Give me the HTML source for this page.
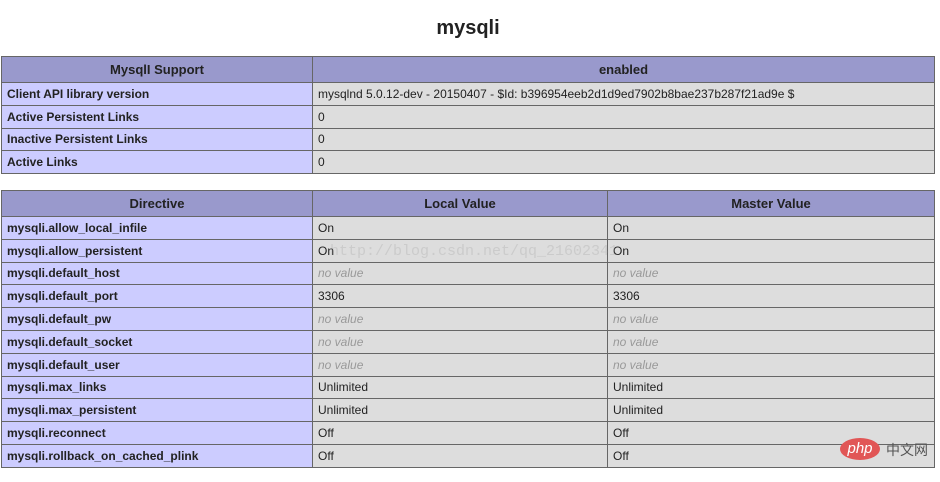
<!DOCTYPE html>
<html><head><meta charset="utf-8"><style>
html,body{margin:0;padding:0;background:#fff;width:940px;height:482px;overflow:hidden;font-family:"Liberation Sans",Arial,sans-serif;font-size:12px;color:#222}
h2{position:absolute;left:0;width:936px;top:17px;margin:0;text-align:center;font-size:20px;font-weight:bold;color:#222}
table{position:absolute;left:1px;border-collapse:collapse;width:934px;table-layout:fixed}
td,th{border:1px solid #666;padding:0 5px;height:21.7px;box-sizing:border-box;vertical-align:middle;white-space:nowrap;overflow:hidden}
td{height:22.8px}
th{background:#9999cc;font-weight:bold;height:26px;font-size:13px;color:#222}
.e{background:#ccccff;font-weight:bold;color:#222}
.v{background:#ddd;color:#222}
.i{color:#999;font-style:italic}
.wm{position:absolute;left:330px;top:243px;color:rgba(150,150,150,.25);font-family:"Liberation Mono",monospace;font-size:15px}
.logo{position:absolute;left:840px;top:438px;width:40px;height:22px;background:#e15656;border-radius:50%;color:#fff;font-style:italic;font-size:15px;text-align:center;line-height:21px}
.cn{position:absolute;left:886px;top:440px;font-family:"Liberation Sans","Noto Sans CJK SC",sans-serif;font-size:14px;color:#555}
</style></head><body>
<h2>mysqli</h2>
<table style="top:56px">
<colgroup><col style="width:311px"><col></colgroup>
<tr><th>MysqlI Support</th><th>enabled</th></tr>
<tr><td class="e">Client API library version</td><td class="v">mysqlnd 5.0.12-dev - 20150407 - $Id: b396954eeb2d1d9ed7902b8bae237b287f21ad9e $</td></tr>
<tr><td class="e">Active Persistent Links</td><td class="v">0</td></tr>
<tr><td class="e">Inactive Persistent Links</td><td class="v">0</td></tr>
<tr><td class="e">Active Links</td><td class="v">0</td></tr>
</table>
<table style="top:190px">
<colgroup><col style="width:311px"><col style="width:295px"><col></colgroup>
<tr><th>Directive</th><th>Local Value</th><th>Master Value</th></tr>
<tr><td class="e">mysqli.allow_local_infile</td><td class="v">On</td><td class="v">On</td></tr>
<tr><td class="e">mysqli.allow_persistent</td><td class="v">On</td><td class="v">On</td></tr>
<tr><td class="e">mysqli.default_host</td><td class="v"><i class="i">no value</i></td><td class="v"><i class="i">no value</i></td></tr>
<tr><td class="e">mysqli.default_port</td><td class="v">3306</td><td class="v">3306</td></tr>
<tr><td class="e">mysqli.default_pw</td><td class="v"><i class="i">no value</i></td><td class="v"><i class="i">no value</i></td></tr>
<tr><td class="e">mysqli.default_socket</td><td class="v"><i class="i">no value</i></td><td class="v"><i class="i">no value</i></td></tr>
<tr><td class="e">mysqli.default_user</td><td class="v"><i class="i">no value</i></td><td class="v"><i class="i">no value</i></td></tr>
<tr><td class="e">mysqli.max_links</td><td class="v">Unlimited</td><td class="v">Unlimited</td></tr>
<tr><td class="e">mysqli.max_persistent</td><td class="v">Unlimited</td><td class="v">Unlimited</td></tr>
<tr><td class="e">mysqli.reconnect</td><td class="v">Off</td><td class="v">Off</td></tr>
<tr><td class="e">mysqli.rollback_on_cached_plink</td><td class="v">Off</td><td class="v">Off</td></tr>
</table>
<div class="wm">http://blog.csdn.net/qq_21602341</div>
<div class="logo">php</div>
<div class="cn">中文网</div>
</body></html>
